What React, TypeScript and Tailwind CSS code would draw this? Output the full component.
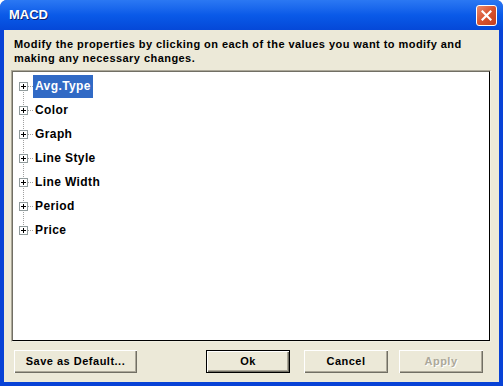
import React from "react";

const items = ["Avg.Type", "Color", "Graph", "Line Style", "Line Width", "Period", "Price"];

function PlusBox() {
  return (
    <div className="relative w-[9px] h-[9px] border border-[#919b9c] bg-white shrink-0">
      <div className="absolute left-[1px] top-[3px] w-[5px] h-[1px] bg-black" />
      <div className="absolute left-[3px] top-[1px] w-[1px] h-[5px] bg-black" />
    </div>
  );
}

function Btn({ children, w, isDefault, disabled }: { children: React.ReactNode; w: string; isDefault?: boolean; disabled?: boolean }) {
  return (
    <div
      className={`${w} h-[23px] flex items-center justify-center bg-[#ece9d8] text-[11px] tracking-[0.5px] font-bold ${
        isDefault
          ? "border border-black shadow-[inset_1px_1px_0_#fff,inset_-1px_-1px_0_#716f64,inset_-2px_-2px_0_#aca899]"
          : "shadow-[inset_1px_1px_0_#fff,inset_-1px_-1px_0_#716f64,inset_-2px_-2px_0_#aca899]"
      } ${disabled ? "text-[#aca899] [text-shadow:1px_1px_0_#fff]" : "text-black"}`}
    >
      {children}
    </div>
  );
}

export default function App() {
  return (
    <div
      className="w-[503px] h-[386px] flex flex-col bg-[#0842d6] rounded-t-[7px] overflow-hidden"
      style={{ fontFamily: '"Liberation Sans", Arial, sans-serif' }}
    >
      <div className="h-[30px] shrink-0 flex items-center justify-between pl-[9px] pr-[6px] bg-gradient-to-b from-[#2b78f3] via-[#0a5ae8] to-[#0548d8]">
        <span className="text-white font-bold text-[13px] [text-shadow:1px_1px_0_#0a1f6e]">MACD</span>
        <div className="w-[21px] h-[21px] rounded-[3px] border border-white bg-gradient-to-br from-[#e8896c] via-[#d9532e] to-[#c4401e] flex items-center justify-center">
          <svg width="11" height="11" viewBox="0 0 11 11">
            <path d="M1.5 1.5 L9.5 9.5 M9.5 1.5 L1.5 9.5" stroke="#fff" strokeWidth="2.2" strokeLinecap="square" />
          </svg>
        </div>
      </div>
      <div className="flex-1 mx-[4px] mb-[4px] bg-[#ece9d8] flex flex-col">
        <p className="pl-[10px] pt-[7px] text-[11px] leading-[14px] font-bold tracking-[0.45px] text-black whitespace-nowrap">
          Modify the properties by clicking on each of the values you want to modify and
          <br />
          making any necessary changes.
        </p>
        <div className="ml-[7px] mt-[5px] w-[480px] h-[272px] bg-white border-t-[#aca899] border-l-[#aca899] border-r-[#f1efe2] border-b-[#f1efe2] border">
          <div className="w-full h-full border border-t-[#716f64] border-l-[#716f64] border-r-black border-b-black pt-[2px] relative">
            <div className="absolute left-[10px] top-[15px] h-[144px] border-l border-dotted border-[#a0a0a0]" />
            {items.map((it, i) => (
              <div key={it} className="h-[24px] flex items-center pl-[6px] relative">
                <PlusBox />
                <div className="w-[5px] border-t border-dotted border-[#a0a0a0]" />
                <span
                  className={`text-[12px] tracking-[0.4px] font-bold px-[2px] h-[23px] flex items-center ${
                    i === 0 ? "bg-[#316ac5] text-white" : "text-black"
                  }`}
                >
                  {it}
                </span>
              </div>
            ))}
          </div>
        </div>
        <div className="flex items-center pt-[8px] pl-[10px]">
          <Btn w="w-[123px]">Save as Default...</Btn>
          <div className="ml-[69px]">
            <Btn w="w-[84px]" isDefault>
              Ok
            </Btn>
          </div>
          <div className="ml-[14px]">
            <Btn w="w-[84px]">Cancel</Btn>
          </div>
          <div className="ml-[11px]">
            <Btn w="w-[84px]" disabled>
              Apply
            </Btn>
          </div>
        </div>
      </div>
    </div>
  );
}
